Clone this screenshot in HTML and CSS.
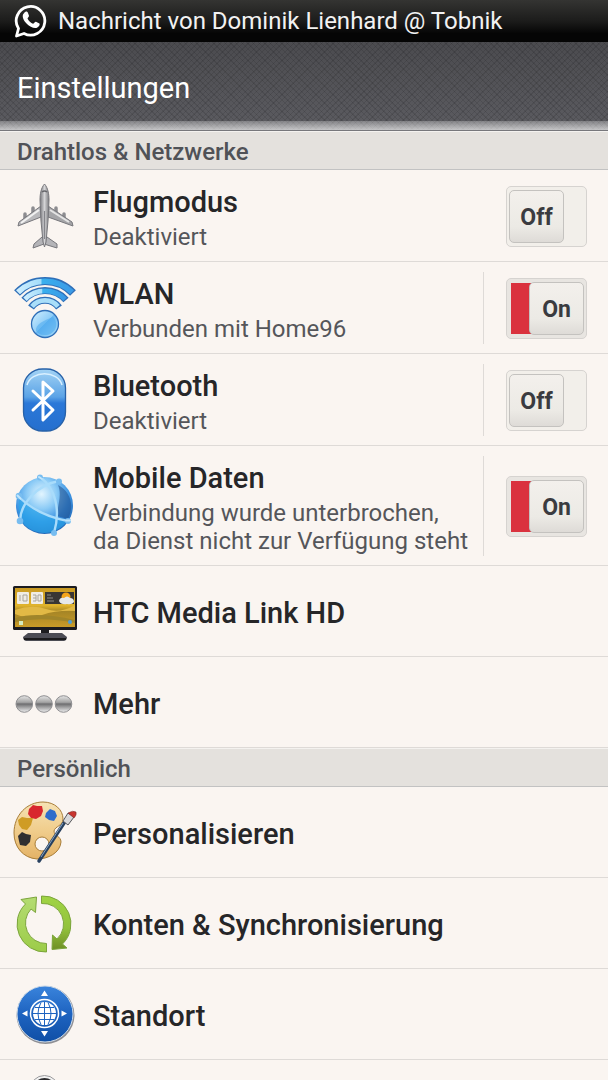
FILE: index.html
```html
<!DOCTYPE html>
<html lang="de">
<head>
    <meta charset="UTF-8">
    <meta name="viewport" content="width=device-width, initial-scale=1.0">
    <title>Einstellungen</title>
    <link rel="stylesheet" href="styles.css">
</head>
<body>
    <!-- Notification ticker -->
    <div class="status-bar">
        <svg class="status-icon" viewBox="0 0 34 36" aria-hidden="true">
            <path d="M2.500 33 L4.500 25.500 A14.300 14.300 0 1 1 10 30.500 Z" fill="none" stroke="#fff" stroke-width="2.800" stroke-linejoin="round"/>
            <path d="M10.500 9.500 C12 8 13.500 8.500 14 10 L15 12.800 C15.200 13.600 13.500 15 13.500 15.500 C14.500 18 17 20 19 20.800 C19.800 20.800 21 18.500 22 18.800 L25.500 20.600 C26.200 21.500 25 24 23 24.800 C20 26 15.500 23.500 13 21 C10 18 8 14.500 9 11.500 Z" fill="#fff"/>
        </svg>
        <span>Nachricht von Dominik Lienhard @ Tobnik</span>
    </div>

    <header class="app-header">
        <h1>Einstellungen</h1>
    </header>

    <main class="settings">
        <section>
            <h2 class="section-title">Drahtlos &amp; Netzwerke</h2>
            <ul class="list">
                <li class="row">
                    <svg class="icon" viewBox="0 0 66 66" aria-hidden="true">
                        <defs>
                            <linearGradient id="metal" x1="0" x2="1" y1="0" y2="0">
                                <stop offset="0" stop-color="#77777c"/>
                                <stop offset=".5" stop-color="#d4d4d6"/>
                                <stop offset="1" stop-color="#7c7c80"/>
                            </linearGradient>
                        </defs>
                        <g stroke="#77777c" stroke-width="1" stroke-linejoin="round">
                            <path d="M13 31v6M21 25v6M44 25v6M52 31v6" stroke="#8c8c90" stroke-width="3.500" stroke-linecap="round"/>
                            <path d="M29 23 L7 39 L6 43 L29 34 Z" fill="#b9b9bc"/>
                            <path d="M36 23 L60 39 L61 43 L36 34 Z" fill="#a5a5a8"/>
                            <path d="M27 27 L9 40" stroke="#f2f2f2" stroke-width="2"/>
                            <path d="M38 27 L57 39" stroke="#e4e4e4" stroke-width="2"/>
                            <path d="M30 54 L22 61 L21 65 L32 61 L45 65 L45 61 L35 54 Z" fill="#b4b4b8"/>
                            <path d="M32.500 1 C29 5 28 11 28 17 L29 38 L31 59 L32.500 64 L34 59 L36 38 L37 17 C37 11 36 5 32.500 1 Z" fill="url(#metal)"/>
                        </g>
                        <path d="M30 9 Q32.500 7 35 9" stroke="#66666b" stroke-width="1.500" fill="none"/>
                        <path d="M32.500 28v28" stroke="#85858a" stroke-width="1.200"/>
                    </svg>
                    <div class="text">
                        <h3>Flugmodus</h3>
                        <p>Deaktiviert</p>
                    </div>
                    <div class="control plain">
                        <label class="switch">
                            <input type="checkbox" role="switch" aria-label="Flugmodus">
                            <span class="track"><span class="knob"><span class="off">Off</span><span class="on">On</span></span></span>
                        </label>
                    </div>
                </li>
                <li class="row">
                    <svg class="icon" viewBox="0 0 66 66" aria-hidden="true">
                        <defs>
                            <linearGradient id="wave" x1="0" x2="1" y1="0" y2="0">
                                <stop offset="0" stop-color="#cdeeff"/>
                                <stop offset=".43" stop-color="#a2dcfa"/>
                                <stop offset=".44" stop-color="#39b0ee"/>
                                <stop offset="1" stop-color="#3a9ae6"/>
                            </linearGradient>
                            <linearGradient id="ball" x1="0" x2="1" y1="0" y2="1">
                                <stop offset="0" stop-color="#d5f1ff"/>
                                <stop offset=".48" stop-color="#8fcdf7"/>
                                <stop offset=".5" stop-color="#6bb8f2"/>
                                <stop offset="1" stop-color="#a9def9"/>
                            </linearGradient>
                        </defs>
                        <g fill="none" stroke="#2f6fb8">
                            <path d="M5 18 A38.600 38.600 0 0 1 61 18" stroke-width="8"/>
                            <path d="M12 25 A28 28 0 0 1 54 25" stroke-width="7"/>
                            <path d="M19 32.500 A17 17 0 0 1 47 32.500" stroke-width="7"/>
                        </g>
                        <g fill="none">
                            <path d="M6 17.200 A38.600 38.600 0 0 1 60 17.200" stroke="url(#wave)" stroke-width="5.600"/>
                            <path d="M13 24.200 A28 28 0 0 1 53 24.200" stroke="url(#wave)" stroke-width="4.800"/>
                            <path d="M20 31.500 A17 17 0 0 1 46 31.500" stroke="#a9def9" stroke-width="4.800"/>
                        </g>
                        <circle cx="33" cy="49" r="13.500" fill="url(#ball)" stroke="#2f6fb8" stroke-width="1.300"/>
                        <path d="M24 56 C23 49 33 45 41 42 C49 51 41 61 32 60 C28 60 26 58 24 56 Z" fill="#45a6ed" opacity=".5"/>
                    </svg>
                    <div class="text">
                        <h3>WLAN</h3>
                        <p>Verbunden mit Home96</p>
                    </div>
                    <div class="control">
                        <label class="switch">
                            <input type="checkbox" role="switch" aria-label="WLAN" checked>
                            <span class="track"><span class="knob"><span class="off">Off</span><span class="on">On</span></span></span>
                        </label>
                    </div>
                </li>
                <li class="row">
                    <svg class="icon" viewBox="0 0 66 66" aria-hidden="true">
                        <defs>
                            <linearGradient id="bt" x1="0" x2="0" y1="0" y2="1">
                                <stop offset="0" stop-color="#a3d3f5"/>
                                <stop offset=".45" stop-color="#5ba3e6"/>
                                <stop offset=".55" stop-color="#2b78d8"/>
                                <stop offset="1" stop-color="#256fce"/>
                            </linearGradient>
                        </defs>
                        <rect x="11.500" y="2" width="42" height="62" rx="19" fill="url(#bt)" stroke="#2761a8" stroke-width="1.300"/>
                        <path d="M15 18 C19 3 46 3 50 18" fill="none" stroke="#d8efff" stroke-width="1.500"/>
                        <path d="M21 24 L41 43 L31 53 V15 L41 24 L21 43" fill="none" stroke="#fff" stroke-width="3" stroke-linejoin="round" stroke-linecap="round"/>
                    </svg>
                    <div class="text">
                        <h3>Bluetooth</h3>
                        <p>Deaktiviert</p>
                    </div>
                    <div class="control">
                        <label class="switch">
                            <input type="checkbox" role="switch" aria-label="Bluetooth">
                            <span class="track"><span class="knob"><span class="off">Off</span><span class="on">On</span></span></span>
                        </label>
                    </div>
                </li>
                <li class="row">
                    <svg class="icon" viewBox="0 0 66 66" aria-hidden="true">
                        <defs>
                            <radialGradient id="globe" cx=".45" cy=".3" r=".75">
                                <stop offset="0" stop-color="#e2f5ff"/>
                                <stop offset=".35" stop-color="#8ccbf6"/>
                                <stop offset=".65" stop-color="#3c93e2"/>
                                <stop offset="1" stop-color="#1d5fae"/>
                            </radialGradient>
                        </defs>
                        <circle cx="32.500" cy="32.500" r="28.500" fill="url(#globe)"/>
                        <path d="M7 26 C18 35 32 44 55 48 C46 62 24 65 11 50 C7 43 6 34 7 26 Z" fill="#2aa4ea" opacity=".7"/>
                        <path d="M46 12 C58 18 63 32 56 46 L45 43 C46 30 50 22 46 12 Z" fill="#1f4f8c" opacity=".55"/>
                        <g fill="none" stroke="#a9dcfb" stroke-width="2.400" stroke-linecap="round">
                            <path d="M6 23 C18 35 34 44 56 48"/>
                            <path d="M8 48 C8 32 24 12 47 8"/>
                            <path d="M28 4 C43 15 49 36 42 60"/>
                        </g>
                        <g fill="#78bdf0">
                            <circle cx="28" cy="4.500" r="3"/>
                            <circle cx="47" cy="8.500" r="3"/>
                            <circle cx="7" cy="23" r="3.300"/>
                            <circle cx="8" cy="48" r="3.300"/>
                            <circle cx="56" cy="48" r="3"/>
                            <circle cx="42" cy="60" r="3"/>
                        </g>
                        <path d="M5.500 22.500l3 3M54 47.500h4M27 4l3 2" stroke="#c2e6fc" stroke-width="2" stroke-linecap="round"/>
                    </svg>
                    <div class="text">
                        <h3>Mobile Daten</h3>
                        <p>Verbindung wurde unterbrochen, da Dienst nicht zur Verfügung steht</p>
                    </div>
                    <div class="control">
                        <label class="switch">
                            <input type="checkbox" role="switch" aria-label="Mobile Daten" checked>
                            <span class="track"><span class="knob"><span class="off">Off</span><span class="on">On</span></span></span>
                        </label>
                    </div>
                </li>
                <li class="row single">
                    <svg class="icon" viewBox="0 2 66 66" aria-hidden="true">
                        <defs>
                            <linearGradient id="field" x1="0" x2="0" y1="0" y2="1">
                                <stop offset="0" stop-color="#c99a22"/>
                                <stop offset=".45" stop-color="#e0b32c"/>
                                <stop offset=".6" stop-color="#a58526"/>
                                <stop offset="1" stop-color="#c99b28"/>
                            </linearGradient>
                        </defs>
                        <path d="M29 52h8v6h-8z" fill="#1c1c1f"/>
                        <path d="M16 57 H50 L55 61 Q55 64 52 65 H14 Q11 64 11 61 Z" fill="#4c4c54"/>
                        <path d="M12 63 H54" stroke="#1a1a1c" stroke-width="2"/>
                        <rect x="1" y="10" width="64" height="44" rx="1.500" fill="#1b1b20"/>
                        <rect x="3" y="12" width="60" height="39" fill="url(#field)"/>
                        <path d="M3 34 Q20 28 34 33 T63 29 V35 Q45 34 30 39 T3 38 Z" fill="#e2b945"/>
                        <path d="M3 42 Q25 35 63 44 V47 Q30 40 3 46 Z" fill="#a0852a"/>
                        <g fill="#f0ece4">
                            <rect x="5" y="16" width="12" height="12" rx="1"/>
                            <rect x="19" y="16" width="12" height="12" rx="1"/>
                        </g>
                        <path d="M8 19v6M11 19h4v6h-4zM21 19h3v6h-3M21 22h3M26 19h3v6h-3z" fill="none" stroke="#a8a49c" stroke-width="1"/>
                        <rect x="33" y="16" width="29" height="12" fill="#393634"/>
                        <path d="M35 19h4M35 22h6M35 25h7" stroke="#8e8a84" stroke-width="1"/>
                        <circle cx="54" cy="21" r="4.500" fill="#f4a51c"/>
                        <path d="M47 25 q1 -4 5 -3 q3 -3 6 0 q4 0 4 4 q-2 3 -7 2 q-6 1 -8 -3z" fill="#e6e8ea"/>
                        <rect x="7" y="45" width="4" height="4" fill="#d6ecc0"/>
                        <circle cx="58" cy="46" r="2" fill="#4c9ed8"/>
                    </svg>
                    <div class="text">
                        <h3>HTC Media Link HD</h3>
                    </div>
                </li>
                <li class="row single">
                    <svg class="icon" viewBox="0 0 66 66" aria-hidden="true">
                        <defs>
                            <linearGradient id="bead" x1="0" x2="0" y1="0" y2="1">
                                <stop offset="0" stop-color="#e6e6e6"/>
                                <stop offset=".4" stop-color="#a4a4a4"/>
                                <stop offset=".5" stop-color="#6e6e70"/>
                                <stop offset="1" stop-color="#f0f0f0"/>
                            </linearGradient>
                        </defs>
                        <g fill="url(#bead)" stroke="#8f8f92" stroke-width="1">
                            <circle cx="12.300" cy="35" r="8.300"/>
                            <circle cx="32" cy="35" r="8.300"/>
                            <circle cx="51.500" cy="35" r="8.300"/>
                        </g>
                    </svg>
                    <div class="text">
                        <h3>Mehr</h3>
                    </div>
                </li>
            </ul>
        </section>

        <section>
            <h2 class="section-title">Persönlich</h2>
            <ul class="list">
                <li class="row single">
                    <svg class="icon" viewBox="0 0 66 66" aria-hidden="true">
                        <defs>
                            <linearGradient id="wood" x1="0" x2="0" y1="0" y2="1">
                                <stop offset="0" stop-color="#f6e2b4"/>
                                <stop offset=".5" stop-color="#f0cd8c"/>
                                <stop offset="1" stop-color="#e4b266"/>
                            </linearGradient>
                        </defs>
                        <path fill-rule="evenodd" d="M31 3 C43 3 51 11 51 20 C51 27 43 27 42 32 C42 37 49 37 49 43 C48 54 36 60 25 60 C11 59 2 48 2 34 C2 16 15 3 31 3 Z M30 38 A7 7 0 1 0 30 52 A7 7 0 1 0 30 38 Z" fill="url(#wood)" stroke="#a87d38" stroke-width="1"/>
                        <path d="M17 10 l4 -4 4 1 5 0 1 5 -2 5 -5 3 -5 -1 -3 -4z" fill="#d8262e"/>
                        <path d="M34 14 l4 -4 5 2 2 5 -3 5 -5 -1 -4 -3z" fill="#2f6dcb"/>
                        <path d="M6 21 l4 -3 5 1 6 0 -2 7 -4 5 -5 -1 -3 -4z" fill="#cf9c25"/>
                        <path d="M6 37 l4 -4 4 2 5 1 -1 7 -4 4 -6 -1 -1 -4z" fill="#302f31"/>
                        <path d="M27 62 L54 21" stroke="#27405f" stroke-width="3.500" stroke-linecap="round"/>
                        <path d="M29 58 L51 24" stroke="#87a4c4" stroke-width="1"/>
                        <path d="M51 22 L56 14 L62 18 L56 26 Z" fill="#d8d8da" stroke="#58585c" stroke-width="1"/>
                        <path d="M56 14 Q61 11 64 13 Q65 16 62 19 Z" fill="#c8352f" stroke="#702a28" stroke-width=".5"/>
                    </svg>
                    <div class="text">
                        <h3>Personalisieren</h3>
                    </div>
                </li>
                <li class="row single">
                    <svg class="icon" viewBox="0 0 66 66" aria-hidden="true">
                        <defs>
                            <linearGradient id="leaf" x1="0" x2="0" y1="0" y2="1">
                                <stop offset="0" stop-color="#b4dc72"/>
                                <stop offset="1" stop-color="#9ccc48"/>
                            </linearGradient>
                            <linearGradient id="moss" x1="0" x2="0" y1="0" y2="1">
                                <stop offset="0" stop-color="#a0d444"/>
                                <stop offset=".6" stop-color="#93c23c"/>
                                <stop offset="1" stop-color="#6f8f26"/>
                            </linearGradient>
                        </defs>
                        <g stroke="#7ca53c" stroke-width="1" stroke-linejoin="round">
                            <path d="M34.500 62 A28 28 0 0 1 13.500 14 L9 9.500 L24.500 7 L23.500 22.500 L19 19 A20.500 20.500 0 0 0 34.500 53.500 Z" fill="url(#leaf)"/>
                            <path d="M29.500 6 A28 28 0 0 1 50.500 54 L55 58 L40 59.500 L40.500 45 L45 49 A20.500 20.500 0 0 0 29.500 13.500 Z" fill="url(#moss)"/>
                        </g>
                    </svg>
                    <div class="text">
                        <h3>Konten &amp; Synchronisierung</h3>
                    </div>
                </li>
                <li class="row single">
                    <svg class="icon" viewBox="0 0 66 66" aria-hidden="true">
                        <defs>
                            <linearGradient id="disc" x1="0" x2="0" y1="0" y2="1">
                                <stop offset="0" stop-color="#3a84dc"/>
                                <stop offset=".5" stop-color="#1e63c0"/>
                                <stop offset="1" stop-color="#0f4fa6"/>
                            </linearGradient>
                        </defs>
                        <circle cx="33.500" cy="34" r="29" fill="#8f8f94"/>
                        <circle cx="33" cy="33" r="28" fill="url(#disc)" stroke="#c9d9ea" stroke-width="1"/>
                        <circle cx="32.500" cy="32.500" r="14" fill="none" stroke="#fff" stroke-width="1.500"/>
                        <circle cx="32.500" cy="32.500" r="11.500" fill="#fff"/>
                        <path d="M32.500 21v23M21 32.500h23M23 26.500h19M23 38.500h19M29 21.500q-6 11 0 22M36 21.500q6 11 0 22" fill="none" stroke="#1e63c0" stroke-width="1"/>
                        <path d="M32.500 9.500l3.500 5.500h-7zM32.500 55.500l3.500 -5.500h-7zM10 32.500l5.500 -3v6zM55 32.500l-5.500 -3v6z" fill="#fff"/>
                    </svg>
                    <div class="text">
                        <h3>Standort</h3>
                    </div>
                </li>
                <li class="row single">
                    <svg class="icon" viewBox="0 0 66 66" aria-hidden="true">
                        <circle cx="32.500" cy="18" r="14.500" fill="#f2f2f2" stroke="#9a9a9c" stroke-width="1"/>
                        <circle cx="32.500" cy="18" r="12" fill="#2b2b2d"/>
                    </svg>
                    <div class="text"></div>
                </li>
            </ul>
        </section>
    </main>
</body>
</html>
```
FILE: styles.css
```css
* {
    box-sizing: border-box;
}
body {
    display: flex;
    flex-direction: column;
    height: 100vh;
    margin: 0;
    font-family: Roboto, "Liberation Sans", sans-serif;
    background-color: #faf5f1;
    color: #262628;
}
h1, h2, h3, p, ul {
    margin: 0;
    padding: 0;
}

/* Top bars */
.status-bar {
    display: flex;
    flex: none;
    align-items: center;
    gap: 10px;
    height: 42px;
    padding: 0 14px;
    font-size: 24px;
    white-space: nowrap;
    color: #f2f2f2;
    background: linear-gradient(#343432, #1c1c1b 50%, #050505 80%, #050505);
}
.status-icon {
    width: 34px;
    height: 36px;
}
.app-header {
    flex: none;
    height: 89px;
    padding: 27px 17px 0;
    color: #fff;
    border-bottom: 1px solid #77777b;
    background:
        linear-gradient(transparent 79px, rgba(255, 255, 255, 0.25) 79px, rgba(255, 255, 255, 0.65)),
        repeating-linear-gradient(135deg, rgba(0, 0, 0, 0.1) 0 1px, transparent 1px 4px),
        repeating-linear-gradient(45deg, rgba(0, 0, 0, 0.1) 0 1px, transparent 1px 4px),
        linear-gradient(#4b4b4f, #5c5c61);
}
.app-header h1 {
    font-size: 29px;
    font-weight: 400;
    line-height: 38px;
}

/* Settings list */
.settings {
    flex: 1;
    min-height: 0;
    overflow-y: auto;
    scrollbar-width: none;
}
.section-title {
    height: 39px;
    padding: 0 17px;
    font-size: 24px;
    font-weight: 500;
    line-height: 41px;
    color: #505257;
    background-color: #e4e1dd;
    border-top: 1px solid #f4f2ef;
    border-bottom: 1px solid #c2c2c2;
}
.list {
    list-style: none;
}
.row {
    display: flex;
    align-items: center;
    gap: 15px;
    min-height: 91px;
    padding-left: 12px;
    border-bottom: 1px solid #dedad7;
}
.icon {
    flex: none;
    width: 66px;
    height: 66px;
}
.text {
    flex: 1;
    padding: 14px 0 10px;
}
.single .text {
    padding: 3px 0 0;
}
.text h3 {
    font-size: 29px;
    font-weight: 500;
    line-height: 36px;
}
.text p {
    margin-top: 3px;
    font-size: 24px;
    line-height: 28px;
    color: #55565a;
}
.control {
    display: flex;
    align-items: center;
    align-self: stretch;
    margin: 10px 0 9px;
    padding: 0 21px 0 22px;
    border-left: 1px solid #dedad7;
}
.control.plain {
    border-left-color: transparent;
}

/* On/off switch */
.switch {
    position: relative;
    display: block;
}
.switch input {
    position: absolute;
    inset: 0;
    width: 100%;
    height: 100%;
    margin: 0;
    opacity: 0;
    cursor: pointer;
}
.track {
    display: flex;
    width: 81px;
    height: 61px;
    padding: 3px 2px;
    border: 1px solid #d6d3d0;
    border-radius: 5px;
    background-color: #f2efea;
}
.knob {
    width: 55px;
    height: 53px;
    border: 1px solid #c4c2bf;
    border-radius: 5px;
    font-size: 23px;
    font-weight: 700;
    line-height: 53px;
    text-align: center;
    color: #3a3b40;
    background: linear-gradient(#f3f0ec, #eceae5 70%, #dedbd7);
}
.knob .on {
    display: none;
}
input:checked + .track {
    background: linear-gradient(#da323e, #da323e) 4px 4px / 24px 51px no-repeat #e8e5e1;
}
input:checked + .track .knob {
    margin-left: auto;
}
input:checked + .track .off {
    display: none;
}
input:checked + .track .on {
    display: inline;
}
```
